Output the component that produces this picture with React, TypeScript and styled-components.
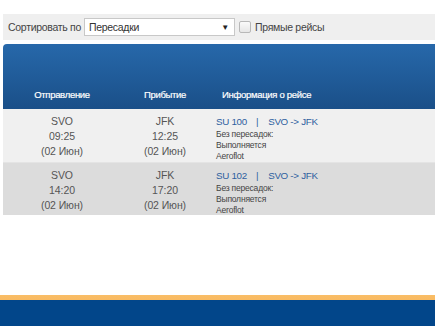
import React from "react";
import styled, { createGlobalStyle } from "styled-components";

const GlobalStyle = createGlobalStyle`
    html, body {
        margin: 0;
        padding: 0;
        background: #ffffff;
        font-family: "Liberation Sans", Arial, sans-serif;
    }
`

const Page = styled.div`
    min-height: 100vh;
    display: flex;
    flex-direction: column;
`

const Content = styled.div`
    padding: 14px 0 0 3px;
`

const Toolbar = styled.div`
    height: 26px;
    background: #efefef;
    display: flex;
    align-items: center;
    padding-left: 5px;
    font-size: 10.5px;
    letter-spacing: -0.3px;
    color: #444;
`

const SortSelect = styled.div`
    margin-left: 3px;
    width: 151px;
    height: 18px;
    border: 1px solid #c8c8c8;
    background: #fff;
    display: flex;
    align-items: center;
    justify-content: space-between;
    padding: 0 5px 0 4px;
    box-sizing: border-box;
    color: #333;
`

const Arrow = styled.span`
    font-size: 8px;
    color: #222;
`

const Check = styled.span`
    margin-left: 4px;
    width: 10px;
    height: 10px;
    border: 1px solid #b8b8b8;
    border-radius: 2px;
    background: linear-gradient(#fafafa, #e6e6e6);
`

const CheckLabel = styled.span`
    margin-left: 4px;
`

const Table = styled.div`
    margin-top: 4px;
`

const Head = styled.div`
    height: 65px;
    border-top-left-radius: 4px;
    background: linear-gradient(#2768aa 0%, #215d9b 45%, #1a4f88 100%);
    display: grid;
    grid-template-columns: 118px 88px 1fr;
    align-items: end;
    padding-bottom: 9px;
    box-sizing: border-box;
    color: #fff;
    font-size: 9.5px;
    letter-spacing: -0.3px;
    -webkit-text-stroke: 0.2px #fff;
`

const HeadCell = styled.div<{ $left?: boolean }>`
    text-align: ${({ $left }) => ($left ? "left" : "center")};
    padding-left: ${({ $left }) => ($left ? "13px" : "0")};
`

const Row = styled.div<{ $alt?: boolean }>`
    height: 53px;
    background: ${({ $alt }) => ($alt ? "#dcdcdc" : "#f0f0f0")};
    border-top: ${({ $alt }) => ($alt ? "1px solid #e4e4e4" : "none")};
    box-sizing: border-box;
    display: grid;
    grid-template-columns: 118px 88px 1fr;
    padding-top: 5px;
`

const Point = styled.div`
    text-align: center;
    font-size: 10.5px;
    line-height: 15px;
    letter-spacing: -0.1px;
    color: #555;
`

const Info = styled.div`
    padding-left: 7px;
`

const Flight = styled.div`
    display: flex;
    align-items: center;
    font-size: 9.8px;
    line-height: 15px;
    letter-spacing: -0.3px;
    color: #2f5f9f;
`

const Separator = styled.span`
    margin: 0 10px 0 9px;
`

const Detail = styled.div`
    font-size: 8.5px;
    line-height: 11px;
    letter-spacing: -0.2px;
    color: #444;
`

const Footer = styled.div`
    margin-top: auto;
    border-top: 5px solid;
    border-image: linear-gradient(#f9bd66, #f08a1c 45%, #5a2a08) 1;
    height: 26px;
    background: #02468a;
`

const flights = [
    { no: "SU 100", dep: "09:25", arr: "12:25" },
    { no: "SU 102", dep: "14:20", arr: "17:20" },
]

const App = () => {
    return (
        <Page>
            <GlobalStyle />
            <Content>
                <Toolbar>
                    Сортировать по
                    <SortSelect>
                        Пересадки
                        <Arrow>▼</Arrow>
                    </SortSelect>
                    <Check />
                    <CheckLabel>Прямые рейсы</CheckLabel>
                </Toolbar>
                <Table>
                    <Head>
                        <HeadCell>Отправление</HeadCell>
                        <HeadCell>Прибытие</HeadCell>
                        <HeadCell $left>Информация о рейсе</HeadCell>
                    </Head>
                    {flights.map((f, i) => (
                        <Row key={f.no} $alt={i % 2 === 1}>
                            <Point>SVO<br />{f.dep}<br />(02 Июн)</Point>
                            <Point>JFK<br />{f.arr}<br />(02 Июн)</Point>
                            <Info>
                                <Flight>
                                    {f.no}
                                    <Separator>|</Separator>
                                    SVO -&gt; JFK
                                </Flight>
                                <Detail>Без пересадок:</Detail>
                                <Detail>Выполняется</Detail>
                                <Detail>Aeroflot</Detail>
                            </Info>
                        </Row>
                    ))}
                </Table>
            </Content>
            <Footer />
        </Page>
    )
}

export default App
